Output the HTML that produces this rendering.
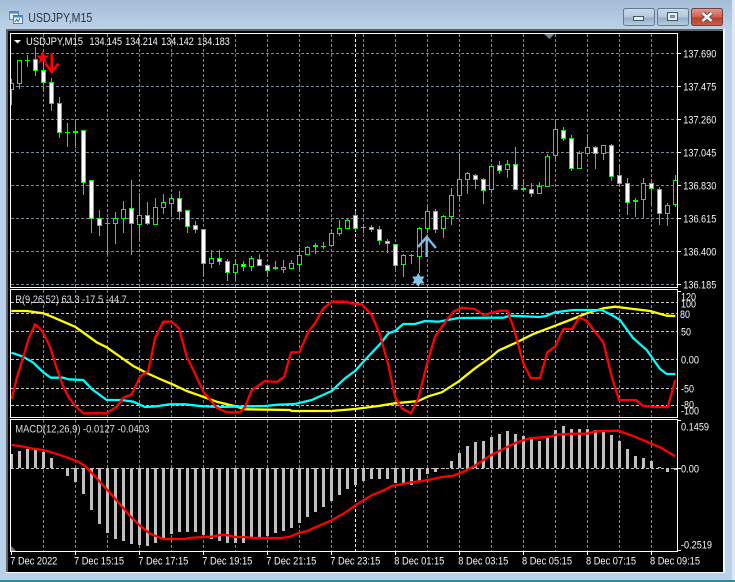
<!DOCTYPE html>
<html>
<head>
<meta charset="utf-8">
<title>USDJPY,M15</title>
<style>
html,body{margin:0;padding:0;width:735px;height:582px;overflow:hidden;background:#b9d1ea}
svg{display:block}
text{font-family:"Liberation Sans",sans-serif;font-size:11.2px;fill:#f2f7fc}
.c{shape-rendering:crispEdges}
</style>
</head>
<body>
<svg width="735" height="582" viewBox="0 0 735 582" xmlns="http://www.w3.org/2000/svg">
<defs>
<linearGradient id="bg" x1="0" y1="0" x2="0" y2="1"><stop offset="0" stop-color="#a4bdd6"/><stop offset="1" stop-color="#bcd2e8"/></linearGradient>
<linearGradient id="bt" x1="0" y1="0" x2="0" y2="1"><stop offset="0" stop-color="#c9d9ea"/><stop offset=".5" stop-color="#b4c9de"/><stop offset=".55" stop-color="#94aec8"/><stop offset="1" stop-color="#b8cde2"/></linearGradient>
<linearGradient id="cl" x1="0" y1="0" x2="0" y2="1"><stop offset="0" stop-color="#e09a90"/><stop offset=".5" stop-color="#d0604f"/><stop offset=".55" stop-color="#b83c28"/><stop offset="1" stop-color="#c9604a"/></linearGradient>
<clipPath id="main"><rect x="11" y="34" width="666" height="253"/></clipPath>
<clipPath id="rsi"><rect x="11" y="290" width="666" height="127"/></clipPath>
<clipPath id="macd"><rect x="11" y="420" width="666" height="131"/></clipPath>
</defs>

<!-- window frame -->
<rect width="735" height="582" fill="#b9d1ea"/>
<rect width="735" height="30" fill="url(#bg)"/>
<rect x="732" y="0" width="3" height="582" fill="#dfe9f3"/>
<rect x="0" y="580" width="735" height="2" fill="#2f8c9c"/>
<rect x="6" y="29" width="719" height="544" fill="#f4f7fa"/>
<rect x="6" y="29" width="717" height="543" fill="#5f6266"/>
<rect x="8" y="31" width="715" height="541" fill="#000"/>

<!-- title icon -->
<g class="c">
<rect x="9.500" y="11.500" width="9" height="8" fill="#dce9f6" stroke="#5c8fc0"/>
<rect x="9.500" y="11.500" width="9" height="2" fill="#4d86c0"/>
<rect x="13.500" y="15.500" width="9" height="8" fill="#f0f6fc" stroke="#4a7fb4"/>
<rect x="13.500" y="15.500" width="9" height="2" fill="#4d86c0"/>
</g>
<path d="M15 22l1.500-2.500 1.500 2 2-3" fill="none" stroke="#2f6aa5" stroke-width="1"/>
<text x="28.300" y="21.800" textLength="64" lengthAdjust="spacingAndGlyphs" style="font-size:12.500px;fill:#24384e">USDJPY,M15</text>

<!-- window buttons -->
<rect x="623.500" y="8.500" width="31" height="17" rx="2" fill="url(#bt)" stroke="#62788f"/>
<rect x="633.500" y="16.500" width="10" height="4" fill="#e6edf4" stroke="#42566a"/>
<rect x="657.500" y="8.500" width="31" height="17" rx="2" fill="url(#bt)" stroke="#62788f"/>
<rect x="667.500" y="12.500" width="10" height="8" fill="#e6edf4" stroke="#42566a"/>
<rect x="670.500" y="15.500" width="4" height="2" fill="#8fa6bd" stroke="#42566a" stroke-width=".6"/>
<rect x="691.500" y="8.500" width="31" height="17" rx="2" fill="url(#cl)" stroke="#7a3a40"/>
<path d="M702.500 13l9 8M711.500 13l-9 8" stroke="#4a4a4a" stroke-width="4.500"/>
<path d="M702.500 13l9 8M711.500 13l-9 8" stroke="#f2f2f2" stroke-width="2.700"/>

<!-- grids -->
<g class="c" fill="none">
<path stroke="#778899" stroke-dasharray="3 2" d="M11 53.500H677M11 86.500H677M11 119.500H677M11 152.500H677M11 185.500H677M11 218.500H677M11 251.500H677M11 284.500H677"/>
<path stroke="#778899" stroke-dasharray="3 2" d="M43.500 34V287M75.500 34V287M107.500 34V287M139.500 34V287M171.500 34V287M203.500 34V287M235.500 34V287M267.500 34V287M299.500 34V287M331.500 34V287M363.500 34V287M395.500 34V287M427.500 34V287M459.500 34V287M491.500 34V287M523.500 34V287M555.500 34V287M587.500 34V287M619.500 34V287M651.500 34V287
M43.500 290V417M75.500 290V417M107.500 290V417M139.500 290V417M171.500 290V417M203.500 290V417M235.500 290V417M267.500 290V417M299.500 290V417M331.500 290V417M363.500 290V417M395.500 290V417M427.500 290V417M459.500 290V417M491.500 290V417M523.500 290V417M555.500 290V417M587.500 290V417M619.500 290V417M651.500 290V417
M43.500 420V551M75.500 420V551M107.500 420V551M139.500 420V551M171.500 420V551M203.500 420V551M235.500 420V551M267.500 420V551M299.500 420V551M331.500 420V551M363.500 420V551M395.500 420V551M427.500 420V551M459.500 420V551M491.500 420V551M523.500 420V551M555.500 420V551M587.500 420V551M619.500 420V551M651.500 420V551"/>
<path stroke="#c4c8cc" stroke-dasharray="3 2" d="M11 302.500H677M11 313.500H677M11 331.500H677M11 359.500H677M11 388.500H677M11 405.500H677M11 468.500H677"/>
<path stroke="#ffffff" stroke-dasharray="3 2" d="M355.500 34V551"/>
</g>

<!-- candles -->
<g clip-path="url(#main)" class="c" fill="none">
<path stroke="#00ff00" d="M11.500 79V105M19.500 60V89M27.500 55V67M25 60.500H30M35.500 47V76M43.500 60V92M51.500 78V111M59.500 97V138M67.500 123V147M65 132.500H70M75.500 122V148M73 131.500H78M73 132.500H78M83.500 130V195M91.500 180V233M99.500 210V236M107.500 218V254M105 223.500H110M115.500 212V244M123.500 201V233M131.500 180V255M139.500 193V239M147.500 202V225M155.500 198V224M163.500 194V214M171.500 195V217M179.500 191V220M187.500 210V233M195.500 221V233M203.500 229V275M211.500 250V268M219.500 250V265M227.500 259V281M235.500 261V281M243.500 261V271M251.500 256V271M259.500 254V266M267.500 265V275M275.500 261V270M273 267.500H278M273 268.500H278M283.500 260V273M291.500 260V269M299.500 248V269M307.500 246V254M315.500 243V254M313 245.500H318M313 246.500H318M323.500 242V249M321 246.500H326M331.500 231V246M339.500 220V236M347.500 218V229M355.500 211V231M363.500 225V233M361 227.500H366M371.500 225V232M379.500 226V245M387.500 239V253M395.500 244V270M403.500 254V277M411.500 254V264M409 255.500H414M419.500 227V273M427.500 206V233M435.500 209V233M443.500 215V238M451.500 188V225M459.500 153V199M467.500 172V194M475.500 174V189M483.500 178V204M491.500 166V193M499.500 161V174M507.500 160V178M515.500 147V189M523.500 181V191M521 188.500H526M521 189.500H526M531.500 183V197M539.500 182V193M547.500 154V187M555.500 122V161M563.500 127V141M571.500 135V171M579.500 151V168M587.500 134V154M595.500 146V169M603.500 145V160M611.500 144V181M619.500 165V187M627.500 178V215M635.500 198V217M633 200.500H638M633 201.500H638M643.500 178V218M651.500 182V204M659.500 187V225M667.500 203V226M675.500 175V207"/>
<path stroke="#00ff00" fill="#000" d="M9.500 83.500h4V89.500h-4zM17.500 60.500h4V83.500h-4zM113.500 218.500h4V223.500h-4zM121.500 209.500h4V218.500h-4zM137.500 215.500h4V224.500h-4zM153.500 207.500h4V224.500h-4zM161.500 202.500h4V207.500h-4zM169.500 198.500h4V203.500h-4zM209.500 258.500h4V263.500h-4zM233.500 264.500h4V272.500h-4zM249.500 258.500h4V266.500h-4zM281.500 267.500h4V269.500h-4zM289.500 263.500h4V268.500h-4zM297.500 255.500h4V264.500h-4zM305.500 247.500h4V254.500h-4zM329.500 233.500h4V245.500h-4zM337.500 228.500h4V233.500h-4zM345.500 220.500h4V228.500h-4zM401.500 255.500h4V264.500h-4zM417.500 228.500h4V256.500h-4zM425.500 211.500h4V228.500h-4zM441.500 216.500h4V228.500h-4zM449.500 195.500h4V216.500h-4zM457.500 179.500h4V195.500h-4zM465.500 173.500h4V179.500h-4zM489.500 166.500h4V189.500h-4zM505.500 164.500h4V169.500h-4zM537.500 186.500h4V193.500h-4zM545.500 156.500h4V186.500h-4zM553.500 129.500h4V155.500h-4zM577.500 153.500h4V168.500h-4zM585.500 147.500h4V153.500h-4zM601.500 145.500h4V153.500h-4zM641.500 183.500h4V199.500h-4zM665.500 205.500h4V213.500h-4zM673.500 180.500h4V204.500h-4z"/>
<path stroke="#00ff00" fill="#fff" d="M33.500 59.500h4V70.500h-4zM41.500 70.500h4V82.500h-4zM49.500 82.500h4V103.500h-4zM57.500 103.500h4V132.500h-4zM81.500 130.500h4V182.500h-4zM89.500 180.500h4V218.500h-4zM97.500 218.500h4V225.500h-4zM129.500 208.500h4V223.500h-4zM145.500 215.500h4V223.500h-4zM177.500 198.500h4V211.500h-4zM185.500 210.500h4V226.500h-4zM193.500 225.500h4V229.500h-4zM201.500 229.500h4V263.500h-4zM217.500 258.500h4V261.500h-4zM225.500 261.500h4V272.500h-4zM241.500 264.500h4V266.500h-4zM257.500 259.500h4V265.500h-4zM265.500 265.500h4V270.500h-4zM353.500 215.500h4V228.500h-4zM369.500 227.500h4V229.500h-4zM377.500 229.500h4V240.500h-4zM385.500 241.500h4V243.500h-4zM393.500 244.500h4V265.500h-4zM433.500 211.500h4V229.500h-4zM473.500 175.500h4V179.500h-4zM481.500 179.500h4V190.500h-4zM497.500 165.500h4V170.500h-4zM513.500 164.500h4V189.500h-4zM529.500 189.500h4V193.500h-4zM561.500 130.500h4V138.500h-4zM569.500 138.500h4V168.500h-4zM593.500 147.500h4V153.500h-4zM609.500 145.500h4V176.500h-4zM617.500 175.500h4V183.500h-4zM625.500 183.500h4V202.500h-4zM649.500 183.500h4V188.500h-4zM657.500 189.500h4V213.500h-4z"/>
</g>

<!-- chart markers -->
<polygon points="42.700,50.500 44.500,55.500 49.500,55.500 45.500,58.700 47,64 42.700,60.800 38.400,64 39.900,58.700 35.900,55.500 40.900,55.500" fill="#ff0000"/>
<path d="M51.700 53V72M45.500 63.500l6.200 8.500 6.700-8.500" fill="none" stroke="#ff0000" stroke-width="2.600"/>
<path d="M426.700 257V238M418 247l8.700-10 9.200 11" fill="none" stroke="#7fb8e0" stroke-width="2.500"/>
<polygon points="418.300,273 420.300,276.500 424.500,276.500 422.300,280 424.500,283.500 420.300,283.500 418.300,287 416.300,283.500 412.100,283.500 414.300,280 412.100,276.500 416.300,276.500" fill="#87c4ea"/>
<polygon points="544,34 554.500,34 549.300,39" fill="#708090"/>
<polygon points="11,546 11,551 16,551" fill="#708090"/>

<!-- RSI pane lines -->
<g clip-path="url(#rsi)" fill="none" stroke-width="2.300" stroke-linejoin="round">
<polyline stroke="#ffff00" points="11.300,311 26.700,311 43.300,313.300 53.300,317.300 63.300,321.700 75,326.700 86.700,335 96.700,342.300 106.700,347.300 120,356.700 133.300,366 146.700,373 160,379 173.300,384.700 186.700,391 200,395.700 216.700,401.700 233.300,405.700 245,409.300 290,410 291.700,411 331.700,411 355,409 378.300,406 395,403.300 418.300,401 428.300,396.300 441.700,392.300 458.300,381.700 475,368.300 490,357.700 498.300,350.700 516.700,342.300 533.300,334 550,327.700 570,320 586.700,313.300 603.300,308.300 615,306.700 633.300,309 650,311 666.700,315.700 675.300,316"/>
<polyline stroke="#00ffff" points="11.300,352.700 23.300,356.700 33.300,362.700 43.300,372.300 50.700,377.700 63.300,377.700 68.300,379.300 83.300,380 91.700,389 106.700,400 121.700,400 133.300,401.700 145,407 156.700,406.300 170,404.300 185,404.300 200,406 216.700,407 245,406.500 265,406 278.300,404.700 295,404 311.700,400 331.700,391 345,378.300 355,371 365,360 381.700,342.300 388.300,333.300 395,331 403.300,324 415,324 425,321 438.300,321.700 458.300,318 490,317.700 503.300,317.700 510,315.700 540,317 546.700,315.700 555,312.300 573.300,310 601.700,310 611.700,315 620,320 633.300,338.300 646.700,350 660,369 666.700,374 675.300,374"/>
<polyline stroke="#ff0000" points="11.700,399 16.700,378.300 23.300,356.700 28.300,340 35,324.300 41.700,330 50,346.700 56.700,368.300 63.300,386.700 68.300,396.700 75,405.700 83.300,413.300 106.700,413.300 116.700,406.700 123.300,397.700 131.700,394.300 140,376.700 148.300,371 155,338.300 163.300,321.700 171.700,321.700 179,328.300 186.700,356.700 193.300,370 203.300,391.700 216.700,407.700 226.700,412.300 240,412.300 245,407 251.700,390.300 265,381 276.700,382 284.300,376.700 291,352.300 299.300,352.300 308.300,331.700 315,323.300 323.300,308.300 332.300,301.700 346.700,301.700 350,303.300 361.700,304.300 371.700,315 380,335 388.300,365 395,396.700 401.700,408.300 411,413.300 418.300,398.300 426.700,365 435,336.700 445,322.300 453.300,311.700 461.700,307.700 475,309 483.300,315 490,313.300 500,310.700 507.300,310.700 513.300,326.700 523.300,363.300 530.700,378 540,378 547.300,352.300 555,346.700 563.300,329 572.300,329 579.300,317.300 586.700,321 603.300,342.300 611.700,376.700 619,400 636,400 642.700,405.700 655,407 667.700,407 675.300,380"/>
</g>

<!-- MACD histogram -->
<path clip-path="url(#macd)" class="c" fill="#c0c0c0" d="M10 454h3V468h-3zM18 451h3V468h-3zM26 449h3V468h-3zM34 450h3V468h-3zM42 452h3V468h-3zM50 458h3V468h-3zM66 468h3V476h-3zM74 468h3V482h-3zM82 468h3V494h-3zM90 468h3V510h-3zM98 468h3V524h-3zM106 468h3V533h-3zM114 468h3V539h-3zM122 468h3V541h-3zM130 468h3V544h-3zM138 468h3V545h-3zM146 468h3V546h-3zM154 468h3V543h-3zM162 468h3V539h-3zM170 468h3V534h-3zM178 468h3V532h-3zM186 468h3V532h-3zM194 468h3V532h-3zM202 468h3V535h-3zM210 468h3V539h-3zM218 468h3V541h-3zM226 468h3V543h-3zM234 468h3V543h-3zM242 468h3V543h-3zM250 468h3V537h-3zM258 468h3V537h-3zM266 468h3V536h-3zM274 468h3V533h-3zM282 468h3V531h-3zM290 468h3V528h-3zM298 468h3V523h-3zM306 468h3V517h-3zM314 468h3V512h-3zM322 468h3V507h-3zM330 468h3V501h-3zM338 468h3V495h-3zM346 468h3V489h-3zM354 468h3V485h-3zM362 468h3V481h-3zM370 468h3V479h-3zM378 468h3V479h-3zM386 468h3V479h-3zM394 468h3V483h-3zM402 468h3V483h-3zM410 468h3V485h-3zM418 468h3V481h-3zM426 468h3V474h-3zM434 468h3V472h-3zM442 468h3V469h-3zM450 461h3V468h-3zM458 453h3V468h-3zM466 446h3V468h-3zM474 442h3V468h-3zM482 441h3V468h-3zM490 437h3V468h-3zM498 434h3V468h-3zM506 431h3V468h-3zM514 434h3V468h-3zM522 436h3V468h-3zM530 438h3V468h-3zM538 441h3V468h-3zM546 437h3V468h-3zM554 430h3V468h-3zM562 426h3V468h-3zM570 429h3V468h-3zM578 429h3V468h-3zM586 429h3V468h-3zM594 430h3V468h-3zM602 431h3V468h-3zM610 435h3V468h-3zM618 441h3V468h-3zM626 449h3V468h-3zM634 456h3V468h-3zM642 458h3V468h-3zM650 461h3V468h-3zM658 467h3V468h-3zM666 468h3V472h-3zM674 468h3V470h-3z"/>
<polyline clip-path="url(#macd)" fill="none" stroke="#ff0000" stroke-width="2.300" stroke-linejoin="round" points="11.300,445 20,446 33.300,448.700 43.300,450 55,453.300 66.700,457.300 78.300,461.700 86,466.700 96.700,478.300 108.300,491 118.300,502.300 130,516 140,525.700 150,533.700 163.300,539 185,539 188.300,538 203.300,537 210,537 220,535 226.700,535 235,537 245,537 253.300,538 281.700,538 290,536.700 298.300,533 306.700,531.300 316.700,526.700 331.700,520.300 345,512.700 358.300,503.300 371.700,495.300 385,489.700 391.700,486 411.700,482.300 428.300,480 441.700,477 453.300,475.700 465,471 475,465.700 490,455.700 503.300,449 516.700,442.300 530,438.300 550,436.700 556.700,434.700 573.300,433.700 586.700,433.700 596.700,431.300 618.300,430.700 633.300,436 646.700,441.700 660,447.300 675.300,456.300"/>

<!-- pane borders and ticks -->
<g class="c" fill="none" stroke="#ffffff">
<rect x="10.500" y="33.500" width="667" height="254"/>
<rect x="10.500" y="289.500" width="667" height="128"/>
<rect x="10.500" y="419.500" width="667" height="132"/>
<path d="M678 53.500h3M678 86.500h3M678 119.500h3M678 152.500h3M678 185.500h3M678 218.500h3M678 251.500h3M678 284.500h3M678 291.500h3M678 420.500h3M678 468.500h3M678 550.500h3M11.500 552v3M75.500 552v3M139.500 552v3M203.500 552v3M267.500 552v3M331.500 552v3M395.500 552v3M459.500 552v3M523.500 552v3M587.500 552v3M651.500 552v3"/>
</g>

<!-- header text -->
<polygon points="14,40 21,40 17.500,43.500" fill="#ffffff"/>
<text x="26" y="45" textLength="57" lengthAdjust="spacingAndGlyphs">USDJPY,M15</text>
<text x="89.500" y="45" textLength="32.500" lengthAdjust="spacingAndGlyphs">134.145</text>
<text x="125.300" y="45" textLength="32.500" lengthAdjust="spacingAndGlyphs">134.214</text>
<text x="161.300" y="45" textLength="32.500" lengthAdjust="spacingAndGlyphs">134.142</text>
<text x="197.300" y="45" textLength="32.500" lengthAdjust="spacingAndGlyphs">134.183</text>
<text x="15.300" y="303" textLength="111.500" lengthAdjust="spacingAndGlyphs" style="fill:#d8dde2">R(9,26,52) 63.3 -17.5 -44.7</text>
<text x="15.300" y="432.300" textLength="134" lengthAdjust="spacingAndGlyphs" style="fill:#d8dde2">MACD(12,26,9) -0.0127 -0.0403</text>

<!-- price axis -->
<text x="683.300" y="57.500" textLength="33" lengthAdjust="spacingAndGlyphs">137.690</text>
<text x="683.300" y="90.500" textLength="33" lengthAdjust="spacingAndGlyphs">137.475</text>
<text x="683.300" y="123.500" textLength="33" lengthAdjust="spacingAndGlyphs">137.260</text>
<text x="683.300" y="156.500" textLength="33" lengthAdjust="spacingAndGlyphs">137.045</text>
<text x="683.300" y="189.500" textLength="33" lengthAdjust="spacingAndGlyphs">136.830</text>
<text x="683.300" y="222.500" textLength="33" lengthAdjust="spacingAndGlyphs">136.615</text>
<text x="683.300" y="255.500" textLength="33" lengthAdjust="spacingAndGlyphs">136.400</text>
<text x="683.300" y="288.500" textLength="33" lengthAdjust="spacingAndGlyphs">136.185</text>
<text x="681" y="300.500" textLength="15" lengthAdjust="spacingAndGlyphs">120</text>
<text x="681" y="307.500" textLength="15" lengthAdjust="spacingAndGlyphs">100</text>
<text x="680" y="318" textLength="10" lengthAdjust="spacingAndGlyphs">80</text>
<text x="681" y="335.500" textLength="10" lengthAdjust="spacingAndGlyphs">50</text>
<text x="681" y="363.500" textLength="18" lengthAdjust="spacingAndGlyphs">0.00</text>
<text x="681" y="392.500" textLength="13" lengthAdjust="spacingAndGlyphs">-50</text>
<text x="681" y="408.500" textLength="13" lengthAdjust="spacingAndGlyphs">-80</text>
<text x="681" y="414.500" textLength="18" lengthAdjust="spacingAndGlyphs">-100</text>
<text x="681" y="430.500" textLength="28" lengthAdjust="spacingAndGlyphs">0.1459</text>
<text x="681" y="472.500" textLength="18" lengthAdjust="spacingAndGlyphs">0.00</text>
<text x="681" y="548.500" textLength="31" lengthAdjust="spacingAndGlyphs">-0.2519</text>

<!-- time axis -->
<text x="10.300" y="564.500" textLength="47" lengthAdjust="spacingAndGlyphs">7 Dec 2022</text>
<text x="74" y="564.500" textLength="50" lengthAdjust="spacingAndGlyphs">7 Dec 15:15</text>
<text x="138.300" y="564.500" textLength="50" lengthAdjust="spacingAndGlyphs">7 Dec 17:15</text>
<text x="202.300" y="564.500" textLength="50" lengthAdjust="spacingAndGlyphs">7 Dec 19:15</text>
<text x="266.300" y="564.500" textLength="50" lengthAdjust="spacingAndGlyphs">7 Dec 21:15</text>
<text x="330.300" y="564.500" textLength="50" lengthAdjust="spacingAndGlyphs">7 Dec 23:15</text>
<text x="394.300" y="564.500" textLength="50" lengthAdjust="spacingAndGlyphs">8 Dec 01:15</text>
<text x="458.300" y="564.500" textLength="50" lengthAdjust="spacingAndGlyphs">8 Dec 03:15</text>
<text x="522" y="564.500" textLength="50" lengthAdjust="spacingAndGlyphs">8 Dec 05:15</text>
<text x="586" y="564.500" textLength="50" lengthAdjust="spacingAndGlyphs">8 Dec 07:15</text>
<text x="650" y="564.500" textLength="50" lengthAdjust="spacingAndGlyphs">8 Dec 09:15</text>
</svg>
</body>
</html>
